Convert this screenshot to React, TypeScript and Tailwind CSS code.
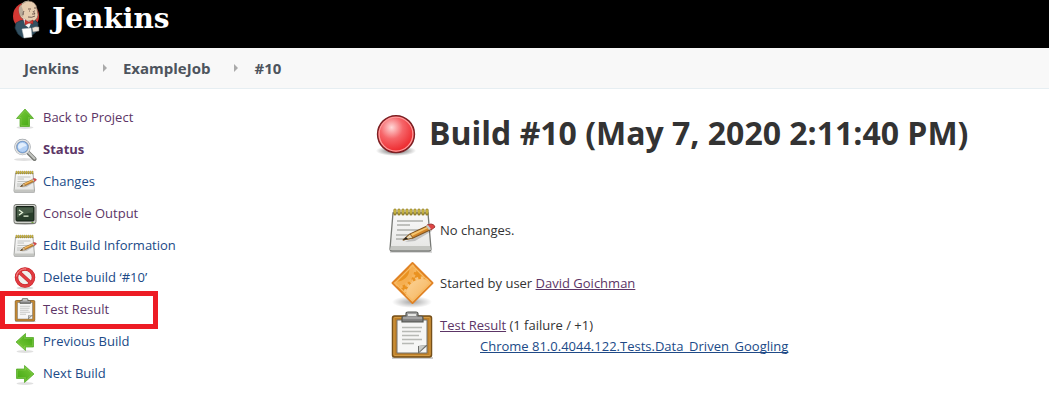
import React from "react";

type IconProps = { className: string };

function ArrowIcon({ className, turn }: IconProps & { turn: number }) {
  const id = `arrow-${turn < 0 ? "left" : turn > 0 ? "right" : "up"}`;
  return (
    <svg viewBox="0 0 48 48" className={className} aria-hidden="true">
      <defs>
        <linearGradient id={id} x1="0" y1="0" x2="1" y2="1">
          <stop offset="0" stopColor="#7ccb3c" />
          <stop offset="1" stopColor="#3fa510" />
        </linearGradient>
      </defs>
      <ellipse cx="24" cy="43" rx="17" ry="3" fill="#000" opacity="0.12" />
      <g transform={`rotate(${turn} 24 24)`}>
        <path d="M24 6 41 25H33V41H14V25H7Z" fill={`url(#${id})`} stroke="#55ab28" strokeWidth="1.5" strokeLinejoin="round" />
        <path d="M24 9 37 23H31V39H16V23H11Z" fill="none" stroke="#a8e070" strokeWidth="1.5" opacity="0.4" />
      </g>
    </svg>
  );
}

function SearchIcon({ className }: IconProps) {
  return (
    <svg viewBox="0 0 48 48" className={className} aria-hidden="true">
      <ellipse cx="22" cy="43" rx="20" ry="3" fill="#000" opacity="0.12" />
      <path d="m30 29 13 13" stroke="#777974" strokeWidth="8" strokeLinecap="round" />
      <path d="m30 28 13 13" stroke="#c5c7c2" strokeWidth="4" strokeLinecap="round" />
      <circle cx="19" cy="18" r="14" fill="#b9d4f3" stroke="#a0a5aa" strokeWidth="5" />
      <circle cx="19" cy="18" r="14" fill="none" stroke="#e5e7e8" strokeWidth="2.5" />
      <circle cx="19" cy="18" r="11" fill="#b4d1f5" stroke="#5d8bc5" strokeWidth="1.5" />
      <path d="M10 18c0-6 5-9 10-8 5 1 6 3 7 6-6-1-9 5-15 6Z" fill="#edf6ff" opacity="0.8" />
    </svg>
  );
}

function NotepadIcon({ className }: IconProps) {
  return (
    <svg viewBox="0 0 48 48" className={className} aria-hidden="true">
      <defs>
        <linearGradient id="pad-paper" x1="0" y1="0" x2="0" y2="1">
          <stop offset="0" stopColor="#fafafa" />
          <stop offset="1" stopColor="#e5e5e3" />
        </linearGradient>
      </defs>
      <path d="M2 44h42v2H2Z" fill="#000" opacity="0.15" />
      <path d="M5 6H40L43 42q0 2-2 2H4q-2 0-2-2Z" fill="url(#pad-paper)" stroke="#777975" strokeWidth="1.3" />
      <path d="M3 39H42L43 43H2Z" fill="#c4c5c1" />
      <path d="M9 14H35M9 18H22M9 23H32M8 28H26M8 32H20" stroke="#aeb0ac" strokeWidth="1.5" />
      <path d="M7 3V7M11 3V7M15 3V7M19 3V7M23 3V7M27 3V7M31 3V7M35 3V7M39 3V7" stroke="#93802a" strokeWidth="3.2" strokeLinecap="round" />
      <path d="M7 3V6M11 3V6M15 3V6M19 3V6M23 3V6M27 3V6M31 3V6M35 3V6M39 3V6" stroke="#d3bf45" strokeWidth="1.6" strokeLinecap="round" />
      <path d="m17 35 10-1 17-10-1-3Z" fill="#000" opacity="0.18" />
      <path d="m15 33 7-6 17-8 3 4-17 8Z" fill="#d4872a" stroke="#805622" strokeWidth="1.1" strokeLinejoin="round" />
      <path d="m23 27 16-7 1 1-16 8Z" fill="#f5c66f" />
      <path d="m15 33 7-6 3 4Z" fill="#ead8b2" stroke="#805622" strokeWidth="0.8" />
      <path d="m15 33 3-3 2 2Z" fill="#222" />
      <path d="m39 18 4-1q3 0 4 3l-4 3Z" fill="#df4544" stroke="#a33b38" />
      <path d="m38 19 2-1 3 4-2 1Z" fill="#c9cbc5" />
    </svg>
  );
}

function TerminalIcon({ className }: IconProps) {
  return (
    <svg viewBox="0 0 48 48" className={className} aria-hidden="true">
      <ellipse cx="24" cy="43" rx="22" ry="3" fill="#000" opacity="0.25" />
      <rect x="2" y="5" width="44" height="38" rx="4" fill="#d0d2cc" stroke="#747770" strokeWidth="2" />
      <rect x="6" y="9" width="36" height="29" rx="2" fill="#293e2b" stroke="#151e16" strokeWidth="2" />
      <path d="M8 11H40V21Q23 22 8 31Z" fill="#5d735b" opacity="0.6" />
      <path d="m12 16 7 5-7 5M21 28h10" fill="none" stroke="#e9f6dc" strokeWidth="2.5" />
      <path d="M37 41h4" stroke="#71a739" strokeWidth="2" />
    </svg>
  );
}

function ForbiddenIcon({ className }: IconProps) {
  return (
    <svg viewBox="0 0 48 48" className={className} aria-hidden="true">
      <ellipse cx="24" cy="44" rx="17" ry="3" fill="#000" opacity="0.15" />
      <circle cx="24" cy="23" r="17" fill="#f0f0ee" stroke="#bf2026" strokeWidth="7" />
      <path d="m12 12 24 22" stroke="#bf2026" strokeWidth="7" />
      <circle cx="24" cy="23" r="17" fill="none" stroke="#e23b40" strokeWidth="5" />
      <path d="m12 12 24 22" stroke="#e23b40" strokeWidth="5" />
      <path d="M7 21C8 11 17 5 26 6" fill="none" stroke="#f39393" strokeWidth="2" />
    </svg>
  );
}

function ClipboardIcon({ className }: IconProps) {
  return (
    <svg viewBox="0 0 48 48" className={className} aria-hidden="true">
      <defs>
        <linearGradient id="clip-metal" x1="0" y1="0" x2="0" y2="1">
          <stop offset="0" stopColor="#aaa" />
          <stop offset="1" stopColor="#777" />
        </linearGradient>
      </defs>
      <path d="M4 46H45v2H4Z" fill="#000" opacity="0.2" />
      <rect x="4.5" y="5" width="39" height="41" rx="2" fill="#bd7f28" stroke="#76501a" strokeWidth="1.5" />
      <rect x="6" y="6.5" width="36" height="38" rx="1" fill="none" stroke="#d49c45" />
      <path d="M9 9H39V42H9Z" fill="#f6f6f5" stroke="#72736f" />
      <path d="M14 16.5H34M14 20.5H33M14 24.5H31M14 28.5H34M14 32.5H26" stroke="#b7b9b5" strokeWidth="1.5" />
      <path d="M30 42V35l9-1v1l-8 7Z" fill="#6d6e6b" />
      <path d="m31 35 7-1-7 7Z" fill="#c8cac7" />
      <path d="M18 5V3q0-2 2-2h8q2 0 2 2v2h3q2 0 2 2v4H14V7q0-2 2-2Z" fill="url(#clip-metal)" stroke="#555752" strokeWidth="1.2" />
      <path d="M20 3h8v2h-8Z" fill="#e5e6e3" />
      <path d="M15 7H34" stroke="#bbb" />
    </svg>
  );
}

function CauseIcon({ className }: IconProps) {
  return (
    <svg viewBox="0 0 48 48" className={className} aria-hidden="true">
      <defs>
        <radialGradient id="cause-shadow">
          <stop offset="0" stopColor="#000" stopOpacity="0.35" />
          <stop offset="1" stopColor="#000" stopOpacity="0" />
        </radialGradient>
        <linearGradient id="cause-gear" x1="0" y1="0" x2="1" y2="1">
          <stop offset="0" stopColor="#fbd398" />
          <stop offset="1" stopColor="#f3a640" />
        </linearGradient>
        <clipPath id="cause-clip"><path d="M24.5 4 43.5 23 24.5 42 5.5 23Z" /></clipPath>
      </defs>
      <ellipse cx="24" cy="42" rx="20" ry="6" fill="url(#cause-shadow)" />
      <path d="M24.5 3 44.5 23 24.5 43 4.5 23Z" fill="#ea9220" stroke="#e08224" strokeWidth="2" strokeLinejoin="round" />
      <g clipPath="url(#cause-clip)">
        <circle cx="34" cy="35" r="16" fill="url(#cause-gear)" />
        <circle cx="34" cy="35" r="17" fill="none" stroke="#f8c37b" strokeWidth="3" strokeDasharray="3 2.6" />
        <circle cx="9" cy="9" r="15" fill="none" stroke="#f5ae50" strokeWidth="5" />
        <circle cx="9" cy="9" r="18" fill="none" stroke="#f6b45b" strokeWidth="3" strokeDasharray="3 2.6" />
      </g>
      <path d="M24.5 5.5 42 23 24.5 40.5 7 23Z" fill="none" stroke="#f8bb65" strokeWidth="1.2" />
    </svg>
  );
}

function FailedBall({ className }: IconProps) {
  return (
    <svg viewBox="0 0 48 48" className={className} aria-hidden="true">
      <defs>
        <radialGradient id="ball-red" cx="0.38" cy="0.32" r="0.62">
          <stop offset="0" stopColor="#ffd8d8" />
          <stop offset="0.5" stopColor="#f66569" />
          <stop offset="1" stopColor="#ee3034" />
        </radialGradient>
        <radialGradient id="ball-shadow">
          <stop offset="0.4" stopColor="#000" stopOpacity="0.4" />
          <stop offset="1" stopColor="#000" stopOpacity="0" />
        </radialGradient>
      </defs>
      <ellipse cx="24" cy="42" rx="23" ry="6" fill="url(#ball-shadow)" />
      <circle cx="24" cy="23" r="21" fill="url(#ball-red)" stroke="#7c2024" strokeWidth="1.8" />
      <circle cx="24" cy="23" r="19.3" fill="none" stroke="#ff9c9c" strokeWidth="1.4" />
    </svg>
  );
}

function ButlerLogo({ className }: IconProps) {
  return (
    <svg viewBox="0 0 28 40" className={className} aria-hidden="true">
      <ellipse cx="14" cy="16" rx="13" ry="13.5" fill="#d33833" />
      <path d="M4 23q4-3 9-3l9-1 4 4v7l-3 3-4 3-8 2-5-4-3-6Z" fill="#335061" stroke="#1d3645" strokeWidth="0.7" />
      <path d="M7 11Q8 2 16 1q8 0 9 8l1 6q-1 6-6 6-5 1-8-2-4 0-5-8Z" fill="#e6cdb0" stroke="#6b584b" strokeWidth="0.6" />
      <path d="M7 12Q6 7 9 5l2 5 1 3-1 4q-3-1-4-5Z" fill="#b9ac9b" />
      <path d="M10 4q3-3 7-3" fill="none" stroke="#b3a896" strokeWidth="1.2" />
      <path d="M16 9h3M22 8h2M17 11h1M22 11h1M21 11l2 3h-3M16 17q4 1 7-1M12 11q-1 1-1 4" fill="none" stroke="#55403a" strokeWidth="0.8" />
      <path d="M11 18q4 4 9 3l-3 7-4-3Z" fill="#f4f4f4" />
      <path d="m13 20 4 2 4-2v4l-4-1-4 2Z" fill="#d33833" stroke="#811c1c" strokeWidth="0.5" />
      <path d="m10 29 9-1 1 9-8 1Z" fill="#fff" stroke="#ccc" strokeWidth="0.5" />
      <path d="M20 28q3-2 7-1v4l-6 1Z" fill="#ece3d9" stroke="#6b6b6b" strokeWidth="0.5" />
    </svg>
  );
}

type Task = { label: string; icon: React.ReactNode; tone: string; marked?: boolean };

const small = "size-6 shrink-0";
const blue = "text-[#204a87]";
const purple = "text-[#5c3566]";

const tasks: Task[] = [
  { label: "Back to Project", icon: <ArrowIcon className={small} turn={0} />, tone: purple },
  { label: "Status", icon: <SearchIcon className={small} />, tone: "font-bold text-[#5c3566]" },
  { label: "Changes", icon: <NotepadIcon className={small} />, tone: blue },
  { label: "Console Output", icon: <TerminalIcon className={small} />, tone: purple },
  { label: "Edit Build Information", icon: <NotepadIcon className={small} />, tone: blue },
  { label: "Delete build ‘#10’", icon: <ForbiddenIcon className={small} />, tone: blue },
  { label: "Test Result", icon: <ClipboardIcon className={small} />, tone: purple, marked: true },
  { label: "Previous Build", icon: <ArrowIcon className={small} turn={-90} />, tone: blue },
  { label: "Next Build", icon: <ArrowIcon className={small} turn={90} />, tone: blue },
];

function Crumb({ children }: { children: React.ReactNode }) {
  return <li><a href="#">{children}</a></li>;
}

function CrumbArrow() {
  return (
    <li aria-hidden="true" className="pr-4 pl-6">
      <svg viewBox="0 0 4 8" className="h-2 w-1"><path d="M0 0 4 4 0 8Z" fill="#aaa" /></svg>
    </li>
  );
}

export default function App() {
  return (
    <div className="bg-white font-['Open_Sans','Noto_Sans',sans-serif] text-[13px] text-[#333]">
      <header className="flex h-12 items-start bg-black pl-3">
        <a href="#" className="flex items-start gap-3 text-white">
          <ButlerLogo className="h-10 w-7" />
          <span className="font-['DejaVu_Serif',serif] text-[28px] leading-[38px] font-bold">Jenkins</span>
        </a>
      </header>

      <nav aria-label="Breadcrumb" className="border-b border-[#e6eef2] bg-[#f8f8f8]">
        <ol className="flex h-10 items-center pl-6 text-[15px] font-bold text-[#4d545d]">
          <Crumb>Jenkins</Crumb>
          <CrumbArrow />
          <Crumb>ExampleJob</Crumb>
          <CrumbArrow />
          <Crumb>#10</Crumb>
        </ol>
      </nav>

      <div className="flex">
        <aside className="w-[375px] shrink-0 pt-[13px]">
          <ul>
            {tasks.map((task) => (
              <li key={task.label} className="relative">
                <a href="#" className={`flex h-8 items-center gap-1.5 pl-[13px] ${task.tone}`}>
                  {task.icon}
                  <span>{task.label}</span>
                </a>
                {task.marked && (
                  <span className="pointer-events-none absolute -top-[3px] left-0 h-[38px] w-[158px] border-[5px] border-[#ed1c24]" />
                )}
              </li>
            ))}
          </ul>
        </aside>

        <main className="min-w-0 flex-1 pt-5">
          <h1 className="flex h-12 items-center gap-3 text-[32px] font-bold whitespace-nowrap">
            <FailedBall className="mt-1 size-[42px] shrink-0" />
            Build #10 (May 7, 2020 2:11:40 PM)
          </h1>

          <div className="mt-12 pl-[13px]">
            <div className="flex h-[52px] items-center gap-1">
              <NotepadIcon className="size-12 shrink-0" />
              <span>No changes.</span>
            </div>
            <div className="flex h-[54px] items-center gap-1">
              <CauseIcon className="size-12 shrink-0" />
              <span>Started by user <a href="#" className="text-[#5c3566] underline">David Goichman</a></span>
            </div>
            <div className="flex items-start gap-1">
              <ClipboardIcon className="size-12 shrink-0" />
              <div className="pt-1 leading-[21px]">
                <p><a href="#" className="text-[#5c3566] underline">Test Result</a> (1 failure / +1)</p>
                <ul className="pl-10">
                  <li><a href="#" className="text-[#204a87] underline [text-decoration-skip-ink:none]">Chrome 81.0.4044.122.Tests.Data_Driven_Googling</a></li>
                </ul>
              </div>
            </div>
          </div>
        </main>
      </div>
    </div>
  );
}
